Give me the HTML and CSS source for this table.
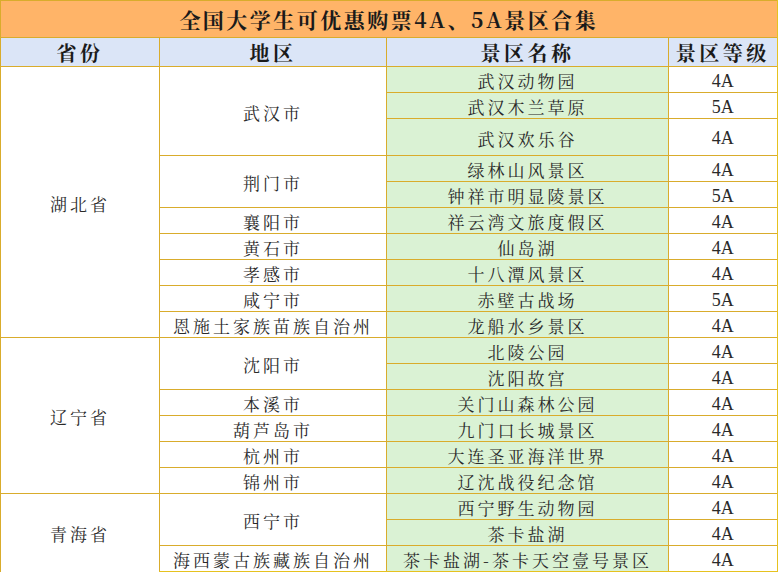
FILE: index.html
```html
<!DOCTYPE html>
<html lang="zh-CN">
<head>
<meta charset="utf-8">
<title>全国大学生可优惠购票4A、5A景区合集</title>
<link rel="stylesheet" href="styles.css">
</head>
<body>
<table class="sheet">
  <colgroup>
    <col class="c-prov">
    <col class="c-city">
    <col class="c-spot">
    <col class="c-level">
  </colgroup>
  <thead>
    <tr class="title-row"><th colspan="4" class="title">全国大学生可优惠购票4A、5A景区合集</th></tr>
    <tr class="head-row">
      <th class="head">省份</th>
      <th class="head">地区</th>
      <th class="head">景区名称</th>
      <th class="head">景区等级</th>
    </tr>
  </thead>
  <tbody>
    <tr><td rowspan="10" class="prov">湖北省</td><td rowspan="3">武汉市</td><td class="spot">武汉动物园</td><td class="lvl">4A</td></tr>
    <tr><td class="spot">武汉木兰草原</td><td class="lvl">5A</td></tr>
    <tr class="tall"><td class="spot">武汉欢乐谷</td><td class="lvl">4A</td></tr>
    <tr><td rowspan="2">荆门市</td><td class="spot">绿林山风景区</td><td class="lvl">4A</td></tr>
    <tr><td class="spot">钟祥市明显陵景区</td><td class="lvl">5A</td></tr>
    <tr><td>襄阳市</td><td class="spot">祥云湾文旅度假区</td><td class="lvl">4A</td></tr>
    <tr><td>黄石市</td><td class="spot">仙岛湖</td><td class="lvl">4A</td></tr>
    <tr><td>孝感市</td><td class="spot">十八潭风景区</td><td class="lvl">4A</td></tr>
    <tr><td>咸宁市</td><td class="spot">赤壁古战场</td><td class="lvl">5A</td></tr>
    <tr><td>恩施土家族苗族自治州</td><td class="spot">龙船水乡景区</td><td class="lvl">4A</td></tr>
    <tr><td rowspan="6" class="prov">辽宁省</td><td rowspan="2">沈阳市</td><td class="spot">北陵公园</td><td class="lvl">4A</td></tr>
    <tr><td class="spot">沈阳故宫</td><td class="lvl">4A</td></tr>
    <tr><td>本溪市</td><td class="spot">关门山森林公园</td><td class="lvl">4A</td></tr>
    <tr><td>葫芦岛市</td><td class="spot">九门口长城景区</td><td class="lvl">4A</td></tr>
    <tr><td>杭州市</td><td class="spot">大连圣亚海洋世界</td><td class="lvl">4A</td></tr>
    <tr><td>锦州市</td><td class="spot">辽沈战役纪念馆</td><td class="lvl">4A</td></tr>
    <tr><td rowspan="3" class="prov">青海省</td><td rowspan="2">西宁市</td><td class="spot">西宁野生动物园</td><td class="lvl">4A</td></tr>
    <tr><td class="spot">茶卡盐湖</td><td class="lvl">4A</td></tr>
    <tr><td>海西蒙古族藏族自治州</td><td class="spot">茶卡盐湖-茶卡天空壹号景区</td><td class="lvl">4A</td></tr>
  </tbody>
</table>
</body>
</html>
```

FILE: styles.css
```css
html, body {
  margin: 0;
  padding: 0;
  background: #ffffff;
}

.sheet {
  border-collapse: collapse;
  table-layout: fixed;
  width: 777px;
  font-family: "Noto Serif CJK SC", "Noto Sans CJK SC", "Liberation Serif", serif;
  color: #2a2a2a;
}

.c-prov { width: 159px; }
.c-city { width: 227px; }
.c-spot { width: 282px; }
.c-level { width: 109px; }

.sheet th,
.sheet td {
  border: 1px solid #d9ac2c;
  padding: 0;
  text-align: center;
  vertical-align: middle;
  line-height: 1;
  overflow: hidden;
  white-space: nowrap;
}

.sheet td {
  font-size: 17px;
  letter-spacing: 3px;
  height: 23px;
  padding-top: 2px;
  font-weight: 400;
}

.title-row th {
  height: 36px;
  background: #ffb468;
  font-size: 21px;
  font-weight: 700;
  letter-spacing: 2.5px;
  color: #1a1a1a;
}

.head-row th {
  height: 27px;
  background: #dbe5f7;
  font-size: 20px;
  font-weight: 700;
  letter-spacing: 3.5px;
  color: #1a1a1a;
  padding-top: 1px;
}

.sheet tr.tall td {
  height: 34px;
}

.sheet td.spot {
  background: #daf2d4;
}

.sheet td.lvl {
  font-family: "Liberation Serif", serif;
  letter-spacing: 0;
  font-size: 18px;
  border-right: 2px solid #e6c21f;
}

.sheet th:last-child {
  border-right: 2px solid #e6c21f;
}

.sheet tr:last-child td {
  border-bottom: 2px solid #e6c21f;
}
```
